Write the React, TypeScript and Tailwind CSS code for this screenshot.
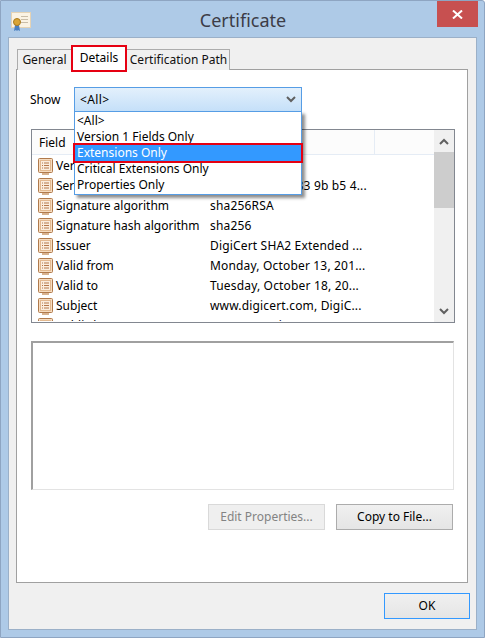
const font = "font-['Noto_Sans',sans-serif]";

const rows = [
  ["Version", "V3"],
  ["Serial number", "0c 09 3a 5b 7d 83 9b b5 4..."],
  ["Signature algorithm", "sha256RSA"],
  ["Signature hash algorithm", "sha256"],
  ["Issuer", "DigiCert SHA2 Extended ..."],
  ["Valid from", "Monday, October 13, 201..."],
  ["Valid to", "Tuesday, October 18, 20..."],
  ["Subject", "www.digicert.com, DigiC..."],
  ["Public key", "RSA (2048 Bits)"],
];

const options = ["<All>", "Version 1 Fields Only", "Extensions Only", "Critical Extensions Only", "Properties Only"];

function CertIcon() {
  return (
    <svg width="31" height="20" viewBox="0 0 31 20" className="block">
      <rect x="0.5" y="0.5" width="19" height="15" fill="#fbf3e4" stroke="#e5d3b5" />
      <rect x="10" y="4" width="7" height="1" fill="#c9bda8" />
      <rect x="10" y="7" width="7" height="1" fill="#c9bda8" />
      <rect x="10" y="10" width="7" height="1" fill="#c9bda8" />
      <path d="M4 13l-1 6 2-1 1 1 1-1 2 1-1-6z" fill="#4a7fc0" />
      <circle cx="6" cy="10" r="3.5" fill="#d9a436" stroke="#a97a1e" />
    </svg>
  );
}

function FieldIcon() {
  return (
    <svg width="15" height="17" viewBox="0 0 15 17" className="block shrink-0">
      <rect x="0.5" y="0.5" width="14" height="14" rx="1" fill="#f6dcc0" stroke="#b07a4c" />
      <rect x="2.5" y="2.5" width="10" height="10" fill="#fbeedd" stroke="#e3b98f" />
      <path d="M4 5h1M6 5h5M4 7.5h1M6 7.5h5M4 10h1M6 10h5" stroke="#b5784a" strokeWidth="1" />
      <rect x="4" y="15" width="7" height="2" fill="#d8b391" />
    </svg>
  );
}

function Chevron({ up = false }: { up?: boolean }) {
  return (
    <svg width="10" height="7" viewBox="0 0 10 7" className="block">
      <path d={up ? "M1 6l4-4 4 4" : "M1 1l4 4 4-4"} fill="none" stroke="#606060" strokeWidth="2" />
    </svg>
  );
}

export default function App() {
  return (
    <div className={`${font} h-[638px] w-[486px] overflow-hidden bg-white text-[12px] leading-4 text-black`}>
      <div className="flex h-[638px] w-[485px] flex-col rounded-tr-[3px] border border-[#8ea5c2] bg-[#aecae7] pb-[7px]">
        {/* Title bar */}
        <div className="grid h-[36px] shrink-0 grid-cols-[1fr_auto_1fr]">
          <div className="pl-[10px] pt-[11px]">
            <CertIcon />
          </div>
          <div className="pl-[1px] pt-[6px] text-[18px] leading-[26px] text-[#3c3c46]">Certificate</div>
          <div className="flex justify-end pr-[6px]">
            <div className="flex h-[26px] w-[41px] items-center justify-center bg-[#c75050]">
              <svg width="11" height="9" viewBox="0 0 11 9">
                <path d="M1 0.5l9 8M10 0.5l-9 8" stroke="#fff" strokeWidth="2" />
              </svg>
            </div>
          </div>
        </div>

        {/* Client area */}
        <div className="mx-[7px] flex min-h-0 flex-1 flex-col border border-[#9bb0c8] bg-[#f0f0f0] px-[7px] pt-[8px]">
          {/* Tabs */}
          <div className="relative z-10 -mb-px flex h-[24px] items-end pl-[1px]">
            <div className="flex h-[21px] w-[55px] items-center justify-center border border-b-0 border-[#acacac] bg-[#f0f0f0] text-[#111]">
              General
            </div>
            <div className="relative z-10 flex h-[24px] w-[54px] items-start justify-center bg-white pt-[4px]">
              Details
              <div className="absolute -inset-x-[1px] -top-[1px] -bottom-[2px] border-[2px] border-[#e60012]" />
            </div>
            <div className="flex h-[21px] w-[104px] items-center justify-center border border-b-0 border-[#acacac] bg-[#f0f0f0] pl-[1px] text-[#111]">
              Certification Path
            </div>
          </div>

          {/* Panel */}
          <div className="flex w-[452px] flex-1 flex-col border border-[#a0a0a0] bg-white pl-[14px] pr-[13px] pt-[17px]">
            <div className="relative z-20 flex h-[25px] items-center">
              <span className="-ml-px w-[44px]">Show</span>
              <div className="relative h-[25px] w-[228px]">
                <div className="flex h-[25px] items-center justify-between border border-[#569de5] bg-gradient-to-b from-[#e3f0fc] to-[#c5e0f9] pl-[5px] pr-[5px]">
                  <span className="tracking-[0.4px]">{"<All>"}</span>
                  <Chevron />
                </div>
                {/* Open dropdown */}
                <div className="absolute left-0 top-[24px] w-[228px] border border-[#569de5] bg-white pb-[1px] pt-[1px] shadow-[3px_3px_3px_rgba(0,0,0,0.45)]">
                  {options.map((o, i) => (
                    <div
                      key={o}
                      className={`h-[16px] pl-[2px] leading-[16px] ${i === 2 ? "bg-[#3399ff] text-white" : ""}`}
                    >
                      {o}
                    </div>
                  ))}
                  <div className="absolute -left-[2px] -right-[2px] top-[31px] h-[20px] border-[2px] border-[#e60012]" />
                </div>
              </div>
            </div>

            {/* Field list */}
            <div className="mt-[17px] flex h-[194px] w-[424px] border border-[#828790] bg-white">
              <div className="min-w-0 flex-1 overflow-hidden">
                <div className="flex h-[25px] border-b border-[#e5ecf5] bg-[#fcfcfc]">
                  <div className="w-[171px] border-r border-[#eef1f6] pl-[7px] leading-[26px]">Field</div>
                  <div className="w-[172px] border-r border-[#e5ecf5]" />
                </div>
                <div className="h-[166px] overflow-hidden pt-[1px]">
                  {rows.map(([f, v]) => (
                    <div key={f} className="flex h-[20px] items-center pl-[6px]">
                      <FieldIcon />
                      <span className="ml-[3px] w-[154px] whitespace-nowrap">{f}</span>
                      <span className="whitespace-nowrap tracking-[0.17px]">{v}</span>
                    </div>
                  ))}
                </div>
              </div>
              <div className="flex w-[20px] shrink-0 flex-col bg-[#f0f0f0]">
                <div className="flex h-[22px] items-center justify-center">
                  <Chevron up />
                </div>
                <div className="h-[56px] bg-[#cdcdcd]" />
                <div className="flex-1" />
                <div className="flex h-[22px] items-center justify-center">
                  <Chevron />
                </div>
              </div>
            </div>

            {/* Value box */}
            <div className="mt-[18px] h-[149px] w-[423px] border-2 border-b border-r border-[#a0a0a0] border-b-[#e3e3e3] border-r-[#e3e3e3] bg-white" />

            {/* Properties buttons */}
            <div className="mt-[14px] flex justify-end gap-[11px] pr-[1px]">
              <div className="flex h-[26px] w-[117px] items-center justify-center border border-[#d9d9d9] bg-[#efefef] text-[#838383]">
                Edit Properties...
              </div>
              <div className="flex h-[26px] w-[117px] items-center justify-center border border-[#acacac] bg-gradient-to-b from-[#f0f0f0] to-[#e5e5e5]">
                Copy to File...
              </div>
            </div>
          </div>

          {/* Footer */}
          <div className="flex h-[46px] shrink-0 items-start justify-end pt-[10px]">
            <div className="-mr-[1px] flex h-[26px] w-[86px] items-center justify-center border border-[#3399ff] bg-gradient-to-b from-[#f0f0f0] to-[#e5e5e5]">
              OK
            </div>
          </div>
        </div>
      </div>
    </div>
  );
}
